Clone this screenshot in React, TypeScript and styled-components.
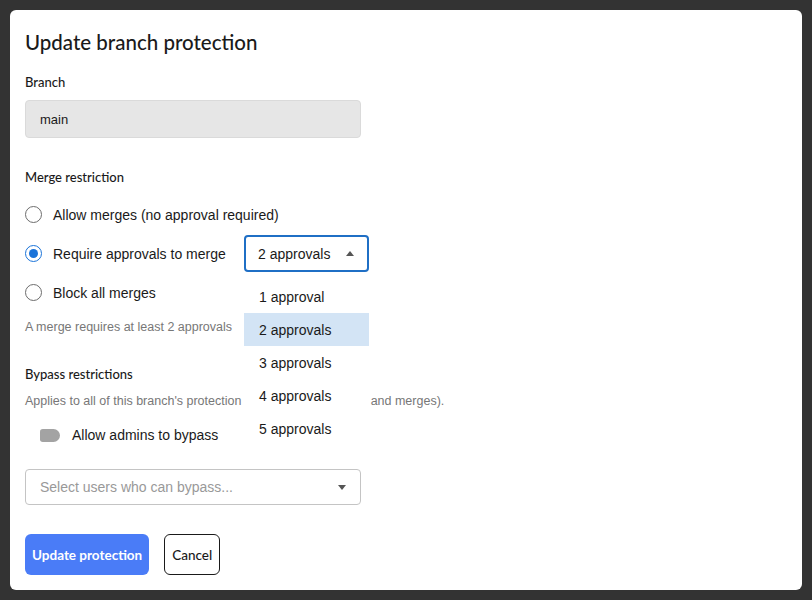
import styled, {createGlobalStyle} from 'styled-components'

// Global.
const Global = createGlobalStyle`
  html, body {
    background: #333333;
    margin: 0;
    padding: 0;
  }

  body {
    font-family: "Liberation Sans", Arial, sans-serif;
    color: #1a1a1a;
  }
`

// Page.
const Page = styled.div`
  box-sizing: border-box;
  height: 600px;
  padding: 10px;
  width: 812px;
`

// Dialog.
const Dialog = styled.div`
  background: #fff;
  border-radius: 6px;
  box-sizing: border-box;
  height: 580px;
  padding: 19px 15px 0;
  width: 792px;
`

const Title = styled.h1`
  font-family: Lato, sans-serif;
  font-size: 20.5px;
  font-weight: 500;
  line-height: 26px;
  margin: 0 0 18px;
`

const Label = styled.div<{$gap?: number}>`
  font-family: Lato, sans-serif;
  font-size: 13px;
  font-weight: 500;
  line-height: 18px;
  margin-bottom: ${p => p.$gap ?? 9}px;
`

const ReadOnlyInput = styled.div`
  align-items: center;
  background: #e6e6e6;
  border: 1px solid #dadada;
  border-radius: 4px;
  box-sizing: border-box;
  display: flex;
  font-size: 13px;
  height: 38px;
  margin-bottom: 30px;
  padding: 0 14px;
  width: 336px;
`

const RadioGroup = styled.div`
  display: flex;
  flex-direction: column;
  margin-top: 9px;
`

const RadioRow = styled.div<{$raised?: boolean}>`
  align-items: center;
  display: flex;
  height: 39px;
  position: relative;
  z-index: ${p => p.$raised ? 2 : 'auto'};
`

const Radio = styled.span<{$checked?: boolean}>`
  border: 1.5px solid ${p => p.$checked ? '#1a73d9' : '#6d6d6d'};
  border-radius: 50%;
  box-sizing: border-box;
  display: inline-block;
  height: 17px;
  margin-right: 11px;
  position: relative;
  width: 17px;

  &::after {
    background: #1a73d9;
    border-radius: 50%;
    content: '';
    display: ${p => p.$checked ? 'block' : 'none'};
    height: 9px;
    left: 2.5px;
    position: absolute;
    top: 2.5px;
    width: 9px;
  }
`

const RadioText = styled.span`
  font-size: 14px;
`

const SelectWrap = styled.div`
  left: 219px;
  position: absolute;
  top: 1px;
  width: 125px;
`

const Select = styled.div<{$open?: boolean}>`
  align-items: center;
  border: ${p => p.$open ? '2px solid #1f6fc5' : '1px solid #c4c4c4'};
  border-radius: 4px;
  box-sizing: border-box;
  display: flex;
  font-size: 14px;
  height: 37px;
  justify-content: space-between;
  padding: 0 ${p => p.$open ? 13 : 18}px 0 ${p => p.$open ? 12 : 13}px;
`

const Caret = styled.span<{$up?: boolean}>`
  border-left: 4.5px solid transparent;
  border-right: 4.5px solid transparent;
  ${p => p.$up ? 'border-bottom: 5px solid #555;' : 'border-top: 5px solid #555;'}
  height: 0;
  width: 0;
`

const Menu = styled.ul`
  background: #fff;
  list-style: none;
  margin: 8px 0 0;
  padding: 0;
`

const MenuItem = styled.li<{$active?: boolean}>`
  align-items: center;
  background: ${p => p.$active ? '#d3e4f5' : 'transparent'};
  display: flex;
  font-size: 14px;
  height: 33px;
  padding-left: 15px;
`

const Help = styled.div`
  color: #777;
  font-size: 12.5px;
  line-height: 16px;
`

const HelperRow = styled(Help)`
  margin: 7px 0 30px;
`

const ToggleRow = styled.div`
  align-items: center;
  display: flex;
  font-size: 14px;
  height: 24px;
  margin: 14px 0 22px 15px;
`

const Toggle = styled.span`
  background: #a3a3a3;
  border-radius: 3px 7px 7px 3px;
  display: inline-block;
  height: 13px;
  margin-right: 12px;
  width: 20px;
`

const UsersSelect = styled(Select)`
  color: #999;
  height: 36px;
  margin-bottom: 29px;
  padding: 0 14px;
  width: 336px;
`

const Actions = styled.div`
  display: flex;
  gap: 15px;
`

const Button = styled.button<{$primary?: boolean}>`
  background: ${p => p.$primary ? '#4a7cf7' : '#fff'};
  border: ${p => p.$primary ? 'none' : '1px solid #1a1a1a'};
  border-radius: 6px;
  color: ${p => p.$primary ? '#fff' : '#1a1a1a'};
  font-family: Lato, sans-serif;
  font-size: 13.5px;
  font-weight: ${p => p.$primary ? 700 : 500};
  height: 41px;
  padding: 0 7px;
`

// App.
export default function App() {

  const options = [1, 2, 3, 4, 5]

  return <Page>
    <Global/>

    <Dialog>

      <Title>Update branch protection</Title>

      {/* Branch. */}
      <Label>Branch</Label>
      <ReadOnlyInput>main</ReadOnlyInput>

      {/* Merge Restriction. */}
      <Label $gap={0}>Merge restriction</Label>
      <RadioGroup>
        <RadioRow>
          <Radio/>
          <RadioText>Allow merges (no approval required)</RadioText>
        </RadioRow>
        <RadioRow $raised>
          <Radio $checked/>
          <RadioText>Require approvals to merge</RadioText>
          <SelectWrap>
            <Select $open>
              2 approvals
              <Caret $up/>
            </Select>
            <Menu>
              {options.map(n => <MenuItem key={n} $active={n === 2}>
                {n} {n === 1 ? 'approval' : 'approvals'}
              </MenuItem>)}
            </Menu>
          </SelectWrap>
        </RadioRow>
        <RadioRow>
          <Radio/>
          <RadioText>Block all merges</RadioText>
        </RadioRow>
      </RadioGroup>
      <HelperRow>A merge requires at least 2 approvals</HelperRow>

      {/* Bypass. */}
      <Label $gap={10}>Bypass restrictions</Label>
      <Help>Applies to all of this branch's protection rules (pushes, deletes and merges).</Help>
      <ToggleRow>
        <Toggle/>
        Allow admins to bypass
      </ToggleRow>
      <UsersSelect>
        Select users who can bypass...
        <Caret/>
      </UsersSelect>

      {/* Actions. */}
      <Actions>
        <Button $primary>Update protection</Button>
        <Button>Cancel</Button>
      </Actions>

    </Dialog>
  </Page>
}
